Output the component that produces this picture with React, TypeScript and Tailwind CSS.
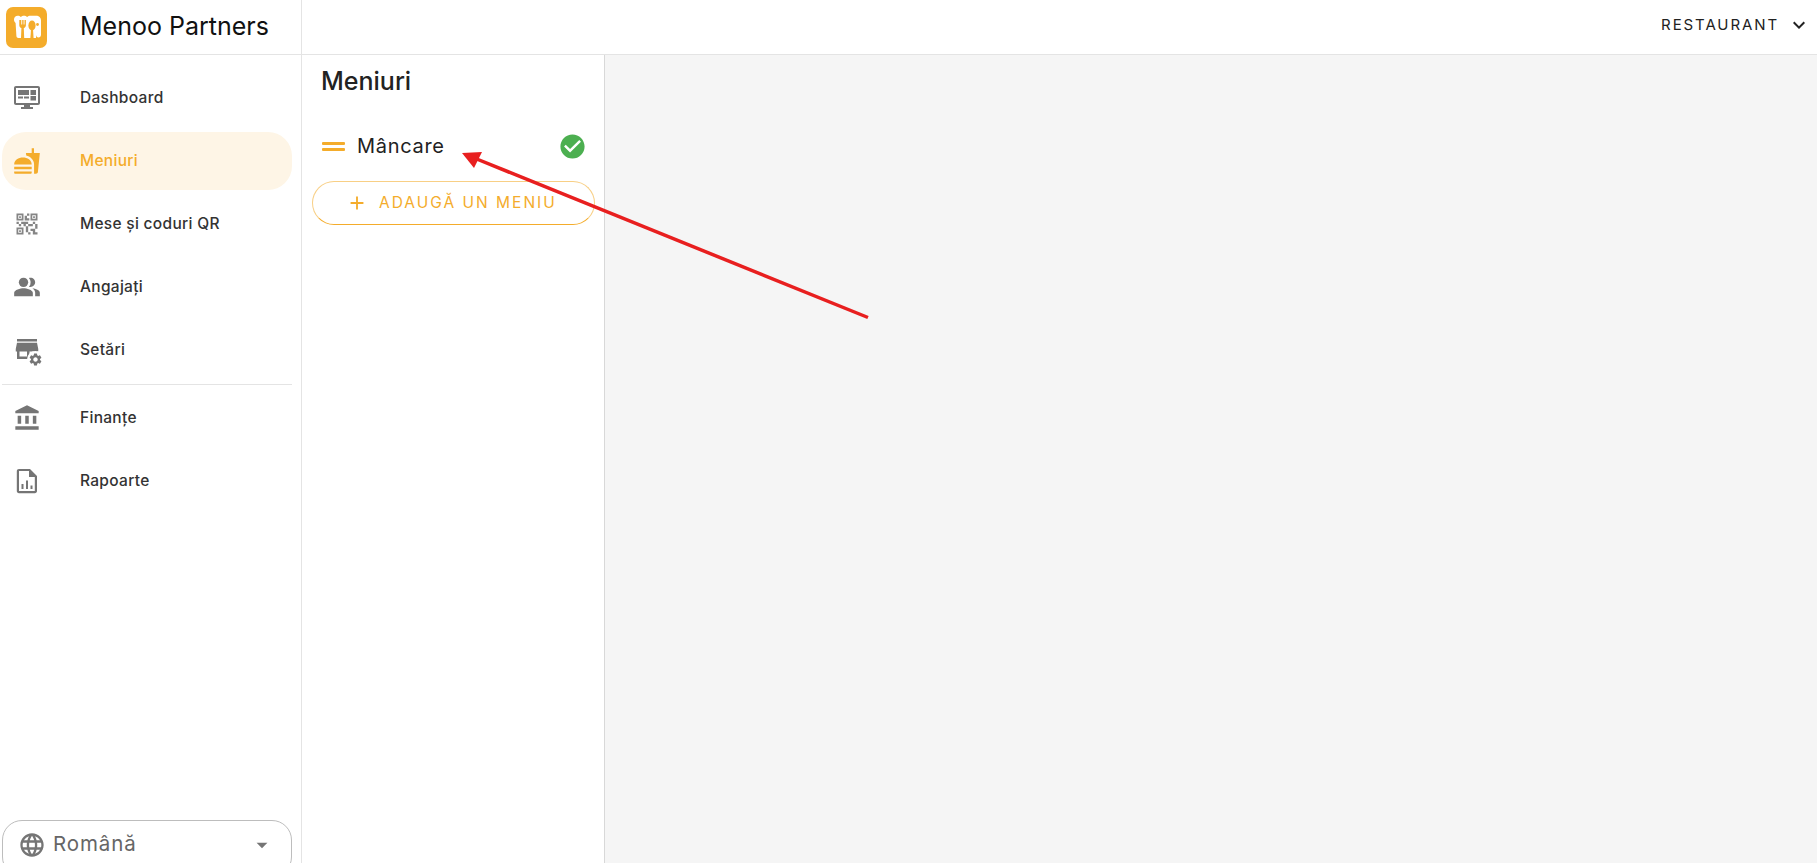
import React from "react";
import {
  MdFastfood,
  MdQrCode2,
  MdPeopleAlt,
  MdStore,
  MdSettings,
  MdAccountBalance,
  MdLanguage,
  MdArrowDropDown,
  MdKeyboardArrowDown,
  MdCheckCircle,
  MdAdd,
} from "react-icons/md";

function Logo() {
  return (
    <svg width="41" height="41" viewBox="0 0 41 41" className="shrink-0">
      <rect width="41" height="41" rx="7" fill="#f4ac2b" />
      <path
        d="M8 12.500C8 10.300 9.700 8.800 11.800 8.800c1.300 0 2.200.5 3 1.300.9-.9 2-1.300 3.200-1.300 1.300 0 2.300.5 3.100 1.300.9-.9 2-1.300 3.300-1.300h5.600c3 0 5 2 5 4.800v14.200c0 1.500-1 2.700-2.500 2.700s-2.500-1.200-2.500-2.700V31H12.500c-1.200 0-2-.8-2.100-2L9.600 16C8.600 15.200 8 14 8 12.500z"
        fill="#fff"
      />
      <path
        d="M13.300 13v5.300c0 1.500.9 2.500 2.100 2.800L15 31h3.200l-.4-9.900c1.200-.3 2.100-1.300 2.100-2.800V13h-1.400v4.500h-.9V13h-1.400v4.500h-.9V13z"
        fill="#f4ac2b"
      />
      <ellipse cx="26" cy="18.500" rx="3.600" ry="5" fill="#f4ac2b" />
      <path d="M25 22h2l.6 9h-3.200z" fill="#f4ac2b" />
      <circle cx="31.500" cy="17.500" r="1.400" fill="#f4ac2b" />
    </svg>
  );
}

function DashIcon() {
  return (
    <svg width="28" height="28" viewBox="0 0 28 28" fill="#757575">
      <path d="M3 2h22c1.200 0 2 .8 2 2v15c0 1.200-.8 2-2 2H17v2h3v2H8v-2h3v-2H3c-1.200 0-2-.8-2-2V4c0-1.200.8-2 2-2zm0 2v15h22V4z" fillRule="evenodd" />
      <rect x="5" y="6" width="11" height="5" />
      <rect x="17.500" y="6" width="5.500" height="5" />
      <rect x="17.500" y="12" width="5.500" height="4.500" />
      <rect x="5" y="12.500" width="5" height="2" />
      <rect x="11" y="12.500" width="5" height="2" />
    </svg>
  );
}

function StoreGearIcon() {
  return (
    <span className="relative block w-[28px] h-[28px]">
      <MdStore size={30} color="#757575" className="absolute -left-[1px] -top-[2px]" />
      <span className="absolute -right-[3px] -bottom-[4px] bg-white rounded-full p-[1px]">
        <MdSettings size={15} color="#757575" />
      </span>
    </span>
  );
}

function ReportIcon() {
  return (
    <svg width="28" height="28" viewBox="0 0 28 28" fill="#757575">
      <path
        fillRule="evenodd"
        d="M6 2h11l7 7v15c0 1.300-.9 2.200-2.200 2.200H6c-1.300 0-2.200-.9-2.200-2.200V4.200C3.800 2.900 4.700 2 6 2zm0 2v20h15.800V10H16V4z"
      />
      <rect x="8.500" y="17" width="2" height="5" />
      <rect x="13" y="13.500" width="2" height="8.500" />
      <rect x="17.500" y="18.500" width="2" height="3.500" />
    </svg>
  );
}

function NavItem({ icon, label, active }: { icon: React.ReactNode; label: string; active?: boolean }) {
  return (
    <div
      className={
        "flex items-center h-[58px] mb-[5px] mx-[2px] w-[290px] rounded-[24px] pl-[11px] " +
        (active ? "bg-[#fef5e6]" : "")
      }
    >
      <span className="w-[28px] h-[28px] flex items-center justify-center shrink-0">{icon}</span>
      <span
        className={
          "ml-[39px] text-[15.5px] font-medium tracking-[0.3px] " + (active ? "text-[#f4ac2b]" : "text-[#333333]")
        }
      >
        {label}
      </span>
    </div>
  );
}

export default function App() {
  return (
    <div className="relative h-[863px] w-full overflow-hidden bg-white font-['Inter','Liberation_Sans',sans-serif] flex flex-col">
      <header className="h-[55px] shrink-0 flex items-center border-b border-[#e4e4e4]">
        <div className="w-[302px] h-full shrink-0 flex items-center border-r border-[#e4e4e4] pl-[6px]">
          <Logo />
          <span className="ml-[33px] mb-[2px] text-[25px] text-[#111111] leading-none">Menoo Partners</span>
        </div>
        <div className="ml-auto flex items-center pr-[6px] pb-[4px]">
          <span className="text-[15px] tracking-[1.9px] text-[#222222]">RESTAURANT</span>
          <MdKeyboardArrowDown size={24} color="#222222" className="ml-[8px]" />
        </div>
      </header>

      <div className="flex flex-1 min-h-0">
        <aside className="w-[302px] shrink-0 border-r border-[#e4e4e4] flex flex-col pt-[14px]">
          <NavItem icon={<DashIcon />} label="Dashboard" />
          <NavItem icon={<MdFastfood size={28} color="#f4ac2b" />} label="Meniuri" active />
          <NavItem icon={<MdQrCode2 size={28} color="#858585" />} label="Mese și coduri QR" />
          <NavItem icon={<MdPeopleAlt size={30} color="#757575" />} label="Angajați" />
          <NavItem icon={<StoreGearIcon />} label="Setări" />
          <div className="mx-[2px] w-[290px] border-t border-[#e4e4e4] mb-[4px]" />
          <NavItem icon={<MdAccountBalance size={28} color="#757575" />} label="Finanțe" />
          <NavItem icon={<ReportIcon />} label="Rapoarte" />
          <div className="mt-auto mb-[-14px] mx-[2px] w-[290px] h-[57px] border border-[#bdbdbd] rounded-[20px] flex items-center pl-[15px] pr-[16px] pb-[8px] text-[#666666]">
            <MdLanguage size={28} color="#757575" />
            <span className="ml-[7px] text-[20.5px] tracking-[0.9px]">Română</span>
            <MdArrowDropDown size={26} color="#757575" className="ml-auto" />
          </div>
        </aside>

        <section className="w-[303px] shrink-0 border-r border-[#d8d8d8] flex flex-col">
          <h1 className="pl-[19px] mt-[11px] text-[25px] leading-[30px] font-medium text-[#222222]">Meniuri</h1>
          <div className="flex items-center h-[50px] mt-[25px] pl-[20px] pr-[18px]">
            <svg width="23" height="9" viewBox="0 0 23 9" className="shrink-0">
              <rect width="23" height="3" y="0" rx="1" fill="#f4ac2b" />
              <rect width="23" height="3" y="6" rx="1" fill="#f4ac2b" />
            </svg>
            <span className="ml-[12px] text-[20px] text-[#222222] tracking-[0.7px]">Mâncare</span>
            <MdCheckCircle size={29} color="#4caf50" className="ml-auto -mr-[1px]" />
          </div>
          <button className="mx-[10px] mt-[10px] w-[283px] h-[44px] rounded-[22px] border border-[#f8cf85] border-b-[#f4ac2b] flex items-center pl-[33px] text-[#f4ac2b]">
            <MdAdd size={22} color="#f4ac2b" />
            <span className="ml-[11px] text-[15.5px] tracking-[2px]">ADAUGĂ UN MENIU</span>
          </button>
        </section>

        <main className="flex-1 bg-[#f5f5f5]" />
      </div>

      <svg
        className="absolute left-0 top-0 pointer-events-none"
        width="1817"
        height="863"
        viewBox="0 0 1817 863"
      >
        <line x1="868" y1="317.500" x2="473" y2="157.500" stroke="#e81f1f" strokeWidth="3.500" />
        <polygon points="462,153 482,152 474,168" fill="#e81f1f" />
      </svg>
    </div>
  );
}
